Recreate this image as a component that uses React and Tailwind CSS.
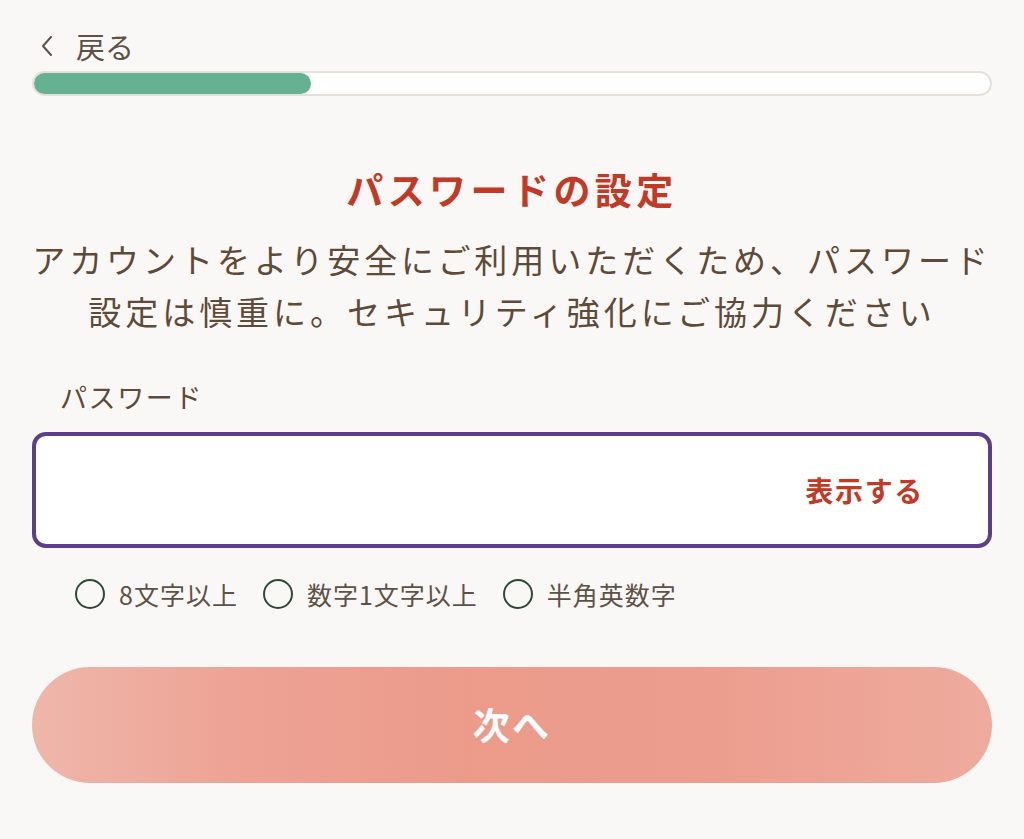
import { useState } from "react";

const RULES = [
  { label: "8文字以上" },
  { label: "数字1文字以上" },
  { label: "半角英数字" },
];

export default function App() {
  const [value, setValue] = useState("");
  const [show, setShow] = useState(false);

  return (
    <div className="min-h-[839px] w-full bg-[#faf8f6] px-8 pt-[26px] font-['Noto_Sans_CJK_JP',sans-serif] text-[#5e4a36]">
      <button className="flex items-center gap-[22px] pl-2 text-[29px] leading-[40px] text-[#5e5146]">
        <svg width="14" height="24" viewBox="0 0 14 24" fill="none" aria-hidden="true">
          <path d="M11 3 L3 12 L11 21" stroke="#5e5146" strokeWidth="2" strokeLinecap="round" strokeLinejoin="round" />
        </svg>
        <span>戻る</span>
      </button>

      <div className="mt-[5px] h-[25px] w-full rounded-full border-2 border-[#e6e0db] bg-white">
        <div className="h-full w-[29%] rounded-full bg-[#65b191]" />
      </div>

      <h1 className="mt-[68px] text-center text-[37px] font-bold leading-[50px] tracking-[0.12em] text-[#c23a25]">
        パスワードの設定
      </h1>

      <div className="mt-[19px] flex flex-col items-center text-[33px] leading-[52px] tracking-[0.12em] whitespace-nowrap">
        <p>アカウントをより安全にご利用いただくため、パスワード</p>
        <p>設定は慎重に。セキュリティ強化にご協力ください</p>
      </div>

      <label className="mt-[40px] block pl-7 text-[27px] leading-[40px] tracking-[0.06em]">パスワード</label>

      <div className="mt-[15px] flex h-[116px] items-center rounded-[14px] border-4 border-[#5b3f8c] bg-white pr-[64px] pl-6">
        <input
          type={show ? "text" : "password"}
          value={value}
          onChange={(e) => setValue(e.target.value)}
          className="h-full flex-1 bg-transparent text-[28px] outline-none"
        />
        <button
          onClick={() => setShow(!show)}
          className="text-[28px] font-bold tracking-[0.06em] text-[#c23a25]"
        >
          表示する
        </button>
      </div>

      <ul className="mt-[29px] flex items-center gap-[25px] pl-[43px]">
        {RULES.map((rule) => (
          <li key={rule.label} className="flex items-center gap-[14px]">
            <span className="h-[30px] w-[30px] rounded-full border-2 border-[#2d4a35]" />
            <span className="text-[25px] leading-[34px] tracking-[0.04em] text-[#5e5146]">{rule.label}</span>
          </li>
        ))}
      </ul>

      <button className="mt-[56px] flex h-[116px] w-full items-center justify-center rounded-full bg-[linear-gradient(90deg,#eeb7aa_0%,#eda294_22%,#ec9b8b_45%,#ec9d8d_70%,#eeab9e_100%)] text-[37px] font-bold tracking-[0.06em] text-white">
        次へ
      </button>
    </div>
  );
}
